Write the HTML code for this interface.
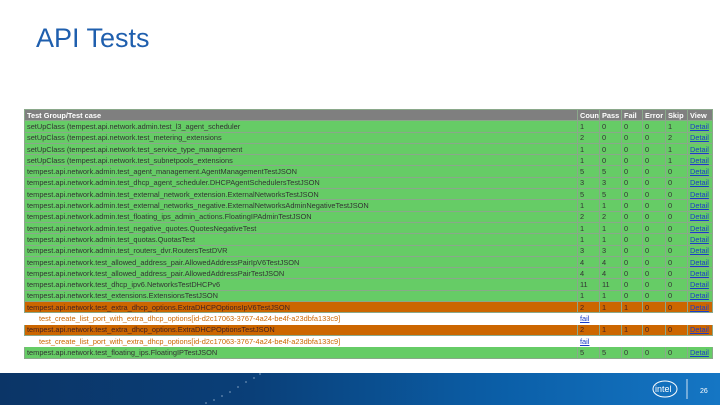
<!DOCTYPE html>
<html><head><style>
body{margin:0;width:720px;height:405px;background:#fff;position:relative;overflow:hidden;font-family:"Liberation Sans",sans-serif}
h1{position:absolute;left:36px;top:23px;margin:0;font-weight:normal;font-size:27px;color:#1f5fae}
table{position:absolute;left:24px;top:109px;width:688px;border-collapse:collapse;font-size:7.4px;table-layout:fixed}
td,th{height:10.3px;padding:0 2px;border:1px solid #8aa88a;white-space:nowrap;overflow:hidden;line-height:9px;color:#333}
th{background:#7f7f7f;color:#fff;text-align:left;font-weight:bold}
tr.g td{background:#66cc66}
tr.o td{background:#cc6600;color:#422}
tr.w td{background:#fff;border-color:#fff}
tr.w td.n{padding-left:14px;color:#c60}
a{color:#1a3cc8;text-decoration:underline}
.foot{position:absolute;left:0;top:373px;width:720px;height:32px;background:linear-gradient(90deg,#0b3567 0%,#0a3f78 35%,#0b5fa8 70%,#1576c4 100%)}
</style></head><body>
<h1>API Tests</h1>
<table>
<colgroup><col style="width:553px"><col style="width:22px"><col style="width:22px"><col style="width:21px"><col style="width:23px"><col style="width:22px"><col style="width:25px"></colgroup>
<tr><th>Test Group/Test case</th><th>Count</th><th>Pass</th><th>Fail</th><th>Error</th><th>Skip</th><th>View</th></tr>
<tr class="g"><td>setUpClass (tempest.api.network.admin.test_l3_agent_scheduler</td><td>1</td><td>0</td><td>0</td><td>0</td><td>1</td><td><a>Detail</a></td></tr>
<tr class="g"><td>setUpClass (tempest.api.network.test_metering_extensions</td><td>2</td><td>0</td><td>0</td><td>0</td><td>2</td><td><a>Detail</a></td></tr>
<tr class="g"><td>setUpClass (tempest.api.network.test_service_type_management</td><td>1</td><td>0</td><td>0</td><td>0</td><td>1</td><td><a>Detail</a></td></tr>
<tr class="g"><td>setUpClass (tempest.api.network.test_subnetpools_extensions</td><td>1</td><td>0</td><td>0</td><td>0</td><td>1</td><td><a>Detail</a></td></tr>
<tr class="g"><td>tempest.api.network.admin.test_agent_management.AgentManagementTestJSON</td><td>5</td><td>5</td><td>0</td><td>0</td><td>0</td><td><a>Detail</a></td></tr>
<tr class="g"><td>tempest.api.network.admin.test_dhcp_agent_scheduler.DHCPAgentSchedulersTestJSON</td><td>3</td><td>3</td><td>0</td><td>0</td><td>0</td><td><a>Detail</a></td></tr>
<tr class="g"><td>tempest.api.network.admin.test_external_network_extension.ExternalNetworksTestJSON</td><td>5</td><td>5</td><td>0</td><td>0</td><td>0</td><td><a>Detail</a></td></tr>
<tr class="g"><td>tempest.api.network.admin.test_external_networks_negative.ExternalNetworksAdminNegativeTestJSON</td><td>1</td><td>1</td><td>0</td><td>0</td><td>0</td><td><a>Detail</a></td></tr>
<tr class="g"><td>tempest.api.network.admin.test_floating_ips_admin_actions.FloatingIPAdminTestJSON</td><td>2</td><td>2</td><td>0</td><td>0</td><td>0</td><td><a>Detail</a></td></tr>
<tr class="g"><td>tempest.api.network.admin.test_negative_quotes.QuotesNegativeTest</td><td>1</td><td>1</td><td>0</td><td>0</td><td>0</td><td><a>Detail</a></td></tr>
<tr class="g"><td>tempest.api.network.admin.test_quotas.QuotasTest</td><td>1</td><td>1</td><td>0</td><td>0</td><td>0</td><td><a>Detail</a></td></tr>
<tr class="g"><td>tempest.api.network.admin.test_routers_dvr.RoutersTestDVR</td><td>3</td><td>3</td><td>0</td><td>0</td><td>0</td><td><a>Detail</a></td></tr>
<tr class="g"><td>tempest.api.network.test_allowed_address_pair.AllowedAddressPairIpV6TestJSON</td><td>4</td><td>4</td><td>0</td><td>0</td><td>0</td><td><a>Detail</a></td></tr>
<tr class="g"><td>tempest.api.network.test_allowed_address_pair.AllowedAddressPairTestJSON</td><td>4</td><td>4</td><td>0</td><td>0</td><td>0</td><td><a>Detail</a></td></tr>
<tr class="g"><td>tempest.api.network.test_dhcp_ipv6.NetworksTestDHCPv6</td><td>11</td><td>11</td><td>0</td><td>0</td><td>0</td><td><a>Detail</a></td></tr>
<tr class="g"><td>tempest.api.network.test_extensions.ExtensionsTestJSON</td><td>1</td><td>1</td><td>0</td><td>0</td><td>0</td><td><a>Detail</a></td></tr>
<tr class="o"><td>tempest.api.network.test_extra_dhcp_options.ExtraDHCPOptionsIpV6TestJSON</td><td>2</td><td>1</td><td>1</td><td>0</td><td>0</td><td><a>Detail</a></td></tr>
<tr class="w"><td class="n">test_create_list_port_with_extra_dhcp_options[id-d2c17063-3767-4a24-be4f-a23dbfa133c9]</td><td><a>fail</a></td><td></td><td></td><td></td><td></td><td></td></tr>
<tr class="o"><td>tempest.api.network.test_extra_dhcp_options.ExtraDHCPOptionsTestJSON</td><td>2</td><td>1</td><td>1</td><td>0</td><td>0</td><td><a>Detail</a></td></tr>
<tr class="w"><td class="n">test_create_list_port_with_extra_dhcp_options[id-d2c17063-3767-4a24-be4f-a23dbfa133c9]</td><td><a>fail</a></td><td></td><td></td><td></td><td></td><td></td></tr>
<tr class="g"><td>tempest.api.network.test_floating_ips.FloatingIPTestJSON</td><td>5</td><td>5</td><td>0</td><td>0</td><td>0</td><td><a>Detail</a></td></tr>
</table>
<div class="foot">
<svg width="720" height="32" style="position:absolute;left:0;top:0">
<g fill="#cfe0f0"><circle cx="206" cy="30" r=".6"/><circle cx="214" cy="27" r=".6"/><circle cx="222" cy="23" r=".6"/><circle cx="230" cy="19" r=".6"/><circle cx="238" cy="14" r=".6"/><circle cx="246" cy="9" r=".6"/><circle cx="254" cy="5" r=".6"/><circle cx="260" cy="1" r=".6"/></g>
<ellipse cx="665" cy="16" rx="12" ry="8" fill="none" stroke="#fff" stroke-width="1"/>
<text x="655" y="19" fill="#fff" font-size="9" font-family="Liberation Sans">intel</text>
<line x1="687" y1="6" x2="687" y2="26" stroke="#fff" stroke-width=".8"/>
<text x="700" y="20" fill="#fff" font-size="7" font-family="Liberation Sans">26</text>
</svg>
</div>
</body></html>
